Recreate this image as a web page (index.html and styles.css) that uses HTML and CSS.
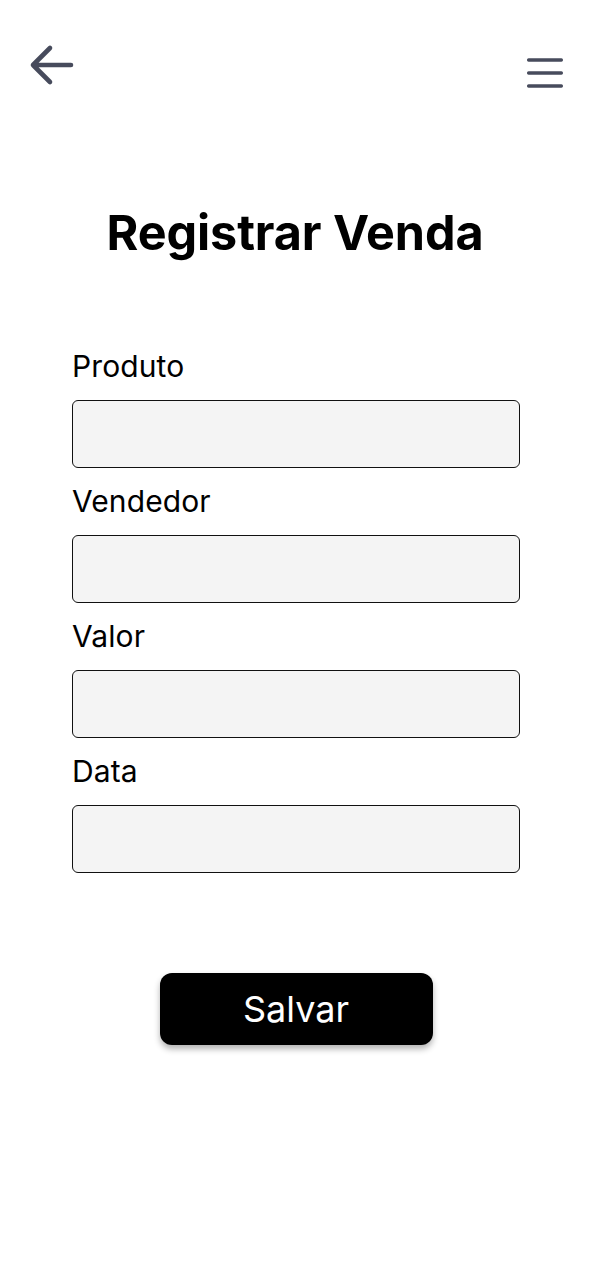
FILE: index.html
```html
<!DOCTYPE html>
<html lang="pt">
<head>
<meta charset="utf-8">
<link rel="stylesheet" href="styles.css">
</head>
<body>
<div class="screen">
  <header class="topbar">
    <button class="icon-btn back" aria-label="Voltar">
      <svg width="48" height="42" viewBox="0 0 48 42"><path d="M42 21H4M21 4L4 21l17 17" fill="none" stroke="#474b5c" stroke-width="4.6" stroke-linecap="round" stroke-linejoin="round"/></svg>
    </button>
    <button class="icon-btn menu" aria-label="Menu">
      <svg width="40" height="34" viewBox="0 0 40 34"><path d="M4.6 4h32.8M4.6 17h32.8M4.6 30h32.8" fill="none" stroke="#474b5c" stroke-width="3.3" stroke-linecap="round"/></svg>
    </button>
  </header>
  <h1 class="title">Registrar Venda</h1>
  <form class="form">
    <label class="field"><span class="label">Produto</span><input class="input" type="text"></label>
    <label class="field"><span class="label">Vendedor</span><input class="input" type="text"></label>
    <label class="field"><span class="label">Valor</span><input class="input" type="text"></label>
    <label class="field"><span class="label">Data</span><input class="input" type="text"></label>
    <div class="actions"><button type="button" class="save">Salvar</button></div>
  </form>
</div>
</body>
</html>
```
FILE: styles.css
```css
* { box-sizing: border-box; }
html, body { margin: 0; padding: 0; background: #fff; }
body { font-family: Inter, "Noto Sans", sans-serif; color: #000; }
.screen { width: 590px; min-height: 1280px; }
.topbar { display: flex; justify-content: space-between; align-items: flex-start; padding: 44px 26px 0 29px; }
.icon-btn { background: none; border: 0; padding: 0; display: block; line-height: 0; }
.icon-btn.menu { margin-top: 12px; }
.title { margin: 114px 0 0; text-align: center; font-size: 48.5px; font-weight: 700; line-height: 58px; letter-spacing: -0.1px; }
.form { display: flex; flex-direction: column; padding: 87px 0 0 72px; }
.field { display: flex; flex-direction: column; width: 448px; }
.field + .field { margin-top: 16px; }
.label { font-size: 30px; line-height: 34px; font-weight: 400; margin-bottom: 17px; letter-spacing: 0.1px; }
.input { height: 68px; width: 448px; background: #f4f4f4; border: 1.6px solid #111; border-radius: 6px; font: inherit; }
.actions { display: flex; justify-content: center; width: 448px; margin-top: 100px; }
.save { width: 273px; height: 72px; background: #000; color: #fff; border: 0; border-radius: 12px; font-family: Inter, sans-serif; font-size: 36px; font-weight: 400; box-shadow: 0 4px 6px rgba(0,0,0,0.3); }
```
